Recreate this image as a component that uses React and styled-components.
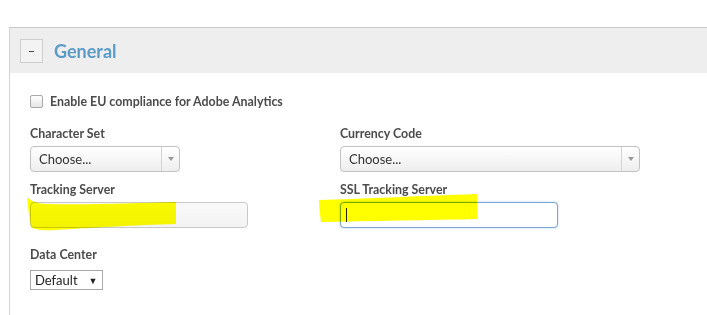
import React from "react";
import styled, { createGlobalStyle } from "styled-components";

const GlobalStyle = createGlobalStyle`
  body {
    margin: 0;
    background: #fff;
    font-family: Lato, "Open Sans", sans-serif;
    color: #4b4b4b;
  }
`;

const Panel = styled.section`
  margin: 27px 0 0 9px;
  border-top: 1px solid #c9c9c9;
  border-left: 1px solid #d4d4d4;
  min-height: 288px;
`;

const Header = styled.div`
  display: flex;
  align-items: center;
  gap: 11px;
  height: 45px;
  padding-left: 10px;
  background: #eeeeee;
`;

const Toggle = styled.button`
  width: 23px;
  height: 24px;
  padding: 0;
  border: 1px solid #cfcfcf;
  background: #f3f3f3;
  color: #333;
  font: 13px Lato, sans-serif;
  line-height: 20px;
`;

const Title = styled.h2`
  margin: 0;
  font-size: 18px;
  font-weight: 700;
  color: #5a9bc6;
`;

const Body = styled.div`
  padding: 21px 0 0 20px;
`;

const CheckRow = styled.label`
  display: flex;
  align-items: center;
  gap: 7px;
  font-size: 12.4px;
  font-weight: 700;
  color: #4b4b4b;
  margin-bottom: 18px;
`;

const Box = styled.span`
  width: 11px;
  height: 11px;
  border: 1px solid #a9a9a9;
  border-radius: 2px;
  background: linear-gradient(#fdfdfd, #e6e6e6);
`;

const Grid = styled.div`
  display: grid;
  grid-template-columns: 310px 1fr;
  row-gap: 11px;
`;

const Field = styled.div`
  position: relative;
  display: flex;
  flex-direction: column;
  align-items: flex-start;
  gap: 5px;
  margin-top: ${(p) => p.$offset || 0}px;
`;

const Label = styled.span`
  font-size: 12.4px;
  font-weight: 700;
  color: #4b4b4b;
  line-height: 14px;
`;

const Select = styled.div`
  display: flex;
  width: ${(p) => p.$width}px;
  height: 26px;
  box-sizing: border-box;
  border: 1px solid #c2c2c2;
  border-radius: 4px;
  background: linear-gradient(#ffffff, #eeeeee);
  font-size: 13px;
  color: #333;
`;

const SelectText = styled.span`
  flex: 1;
  padding-left: 8px;
  line-height: 24px;
`;

const Arrow = styled.span`
  width: 17px;
  border-left: 1px solid #d2d2d2;
  display: flex;
  align-items: center;
  justify-content: center;
  &::after {
    content: "";
    border-left: 3px solid transparent;
    border-right: 3px solid transparent;
    border-top: 4px solid #999;
  }
`;

const Input = styled.div`
  position: relative;
  width: 218px;
  height: 26px;
  box-sizing: border-box;
  border: 1px solid ${(p) => (p.$focused ? "#7fa6d4" : "#c8c8c8")};
  border-radius: 4px;
  background: ${(p) => (p.$focused ? "#ffffff" : "linear-gradient(#f9f9f9, #f3f3f3)")};
  box-shadow: ${(p) => (p.$focused ? "0 0 2px rgba(80,130,200,0.5)" : "none")};
`;

const Caret = styled.span`
  position: absolute;
  left: 5px;
  top: 5px;
  width: 1px;
  height: 14px;
  background: #222;
`;

const Highlight = styled.svg`
  position: absolute;
  pointer-events: none;
  mix-blend-mode: multiply;
`;

const NativeSelect = styled.div`
  display: flex;
  align-items: center;
  gap: 11px;
  width: 73px;
  height: 20px;
  box-sizing: border-box;
  padding: 0 0 0 4px;
  border: 1px solid #a8a8a8;
  font-size: 13px;
  color: #222;
  margin-top: 3px;
`;

const Tri = styled.span`
  font-size: 9px;
  color: #222;
`;

export default function App() {
  return (
    <>
      <GlobalStyle />
      <Panel>
        <Header>
          <Toggle>–</Toggle>
          <Title>General</Title>
        </Header>
        <Body>
          <CheckRow>
            <Box />
            Enable EU compliance for Adobe Analytics
          </CheckRow>
          <Grid>
            <Field>
              <Label>Character Set</Label>
              <Select $width={150}>
                <SelectText>Choose...</SelectText>
                <Arrow />
              </Select>
            </Field>
            <Field>
              <Label>Currency Code</Label>
              <Select $width={300}>
                <SelectText>Choose...</SelectText>
                <Arrow />
              </Select>
            </Field>
            <Field>
              <Label>Tracking Server</Label>
              <Input />
              <Highlight
                style={{ left: -3, top: 14 }}
                width="152"
                height="36"
                viewBox="0 0 152 36"
              >
                <path
                  d="M0 0 C4 4 10 7 20 7 C60 8 110 6 149 5 L149 27 C110 28 60 31 30 33 C14 34 6 32 4 30 C2 20 1 10 0 0 Z"
                  fill="#ffff00"
                />
              </Highlight>
            </Field>
            <Field>
              <Label>SSL Tracking Server</Label>
              <Input $focused>
                <Caret />
              </Input>
              <Highlight
                style={{ left: -21, top: 11 }}
                width="160"
                height="30"
                viewBox="0 0 160 30"
              >
                <path
                  d="M0 6 C40 5 100 2 158 0 L158 25 C110 26 50 27 2 28 C1 20 0 12 0 6 Z"
                  fill="#ffff00"
                />
              </Highlight>
            </Field>
            <Field $offset={9}>
              <Label>Data Center</Label>
              <NativeSelect>
                Default
                <Tri>▼</Tri>
              </NativeSelect>
            </Field>
          </Grid>
        </Body>
      </Panel>
    </>
  );
}
